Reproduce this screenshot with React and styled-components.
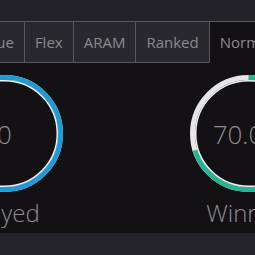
import React from "react";
import styled, { createGlobalStyle } from "styled-components";

const GlobalStyle = createGlobalStyle`
  html, body {
    margin: 0;
    padding: 0;
    background: #232226;
    overflow: hidden;
  }
  body {
    font-family: "Open Sans", "Liberation Sans", sans-serif;
  }
`;

const Window = styled.div`
  width: 255px;
  height: 255px;
  display: flex;
  flex-direction: column;
  overflow: hidden;
  background: #232226;
`;

const TopBand = styled.div`
  height: 21px;
  flex-shrink: 0;
`;

const TabBar = styled.div`
  display: flex;
  flex-shrink: 0;
  margin-left: -78px;
  height: 42px;
`;

const Tab = styled.div`
  box-sizing: border-box;
  height: 42px;
  padding: 0 10px;
  display: flex;
  align-items: center;
  font-size: 15px;
  color: #8b8a90;
  white-space: nowrap;
  background: ${(p) => (p.$active ? "#131114" : "#29282c")};
  border-top: 1px solid #59585c;
  border-bottom: 1px solid ${(p) => (p.$active ? "#131114" : "#59585c")};
  border-left: 1px solid #59585c;
`;

const Content = styled.div`
  flex: 1;
  background: #131114;
  overflow: hidden;
`;

const StatRow = styled.div`
  display: flex;
  margin-left: -117.5px;
  padding-top: 12px;
`;

const Stat = styled.div`
  width: 244px;
  flex-shrink: 0;
  display: flex;
  flex-direction: column;
  align-items: center;
`;

const Ring = styled.div`
  position: relative;
  width: 117px;
  height: 117px;
`;

const RingValue = styled.div`
  position: absolute;
  inset: 0;
  display: flex;
  align-items: center;
  justify-content: center;
  font-size: 26px;
  font-weight: 300;
  color: #8d8c92;
  padding-top: 1px;
`;

const Label = styled.div`
  margin-top: 6px;
  font-size: 24px;
  font-weight: 300;
  color: #8d8c92;
  line-height: 30px;
  white-space: nowrap;
`;

const BottomBand = styled.div`
  height: 22px;
  flex-shrink: 0;
  background: #252428;
`;

const tabs = ["Solo Queue", "Flex", "ARAM", "Ranked", "Normal"];

const stats = [
  { label: "Played", value: "0", pct: 100, color: "#1e9bd6" },
  { label: "Winrate", value: "70.0%", pct: 70, color: "#25b393" },
];

const RingChart = ({ pct, color }) => {
  const r = 56;
  const c = 2 * Math.PI * r;
  return (
    <svg width="117" height="117" viewBox="0 0 117 117">
      <circle cx="58.5" cy="58.5" r={r} fill="none" stroke="#e6e6e8" strokeWidth="5" />
      <circle
        cx="58.5"
        cy="58.5"
        r={r}
        fill="none"
        stroke={color}
        strokeWidth="5"
        strokeDasharray={`${(c * pct) / 100} ${c}`}
        transform="rotate(-90 58.5 58.5)"
      />
      <circle cx="58.5" cy="58.5" r="52.8" fill="none" stroke="#f2f2f2" strokeWidth="1.5" />
    </svg>
  );
};

export default function App() {
  return (
    <>
      <GlobalStyle />
      <Window>
        <TopBand />
        <TabBar>
          {tabs.map((t) => (
            <Tab key={t} $active={t === "Normal"}>
              {t}
            </Tab>
          ))}
        </TabBar>
        <Content>
          <StatRow>
            {stats.map((s) => (
              <Stat key={s.label}>
                <Ring>
                  <RingChart pct={s.pct} color={s.color} />
                  <RingValue>{s.value}</RingValue>
                </Ring>
                <Label>{s.label}</Label>
              </Stat>
            ))}
          </StatRow>
        </Content>
        <BottomBand />
      </Window>
    </>
  );
}
